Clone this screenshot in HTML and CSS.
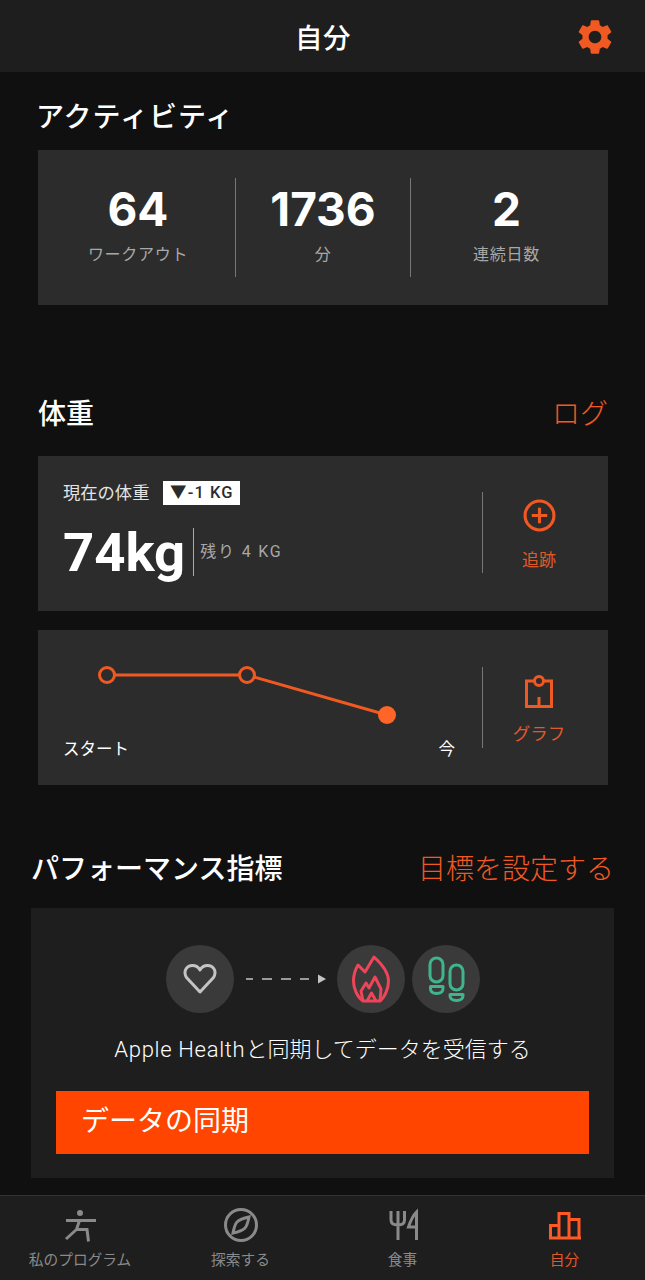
FILE: index.html
```html
<!DOCTYPE html>
<html lang="ja">
<head>
    <meta charset="UTF-8">
    <meta name="viewport" content="width=device-width, initial-scale=1.0">
    <title>自分</title>
    <link rel="stylesheet" href="styles.css">
</head>
<body>
    <div class="topbar">
        <h1>自分</h1>
        <svg class="gear" viewBox="0 0 24 24"><path fill="#f05a22" fill-rule="evenodd" d="M19.14 12.94c.04-.3.06-.61.06-.94 0-.32-.02-.64-.07-.94l2.03-1.58c.18-.14.23-.41.12-.61l-1.92-3.32c-.12-.22-.37-.29-.59-.22l-2.39.96c-.5-.38-1.03-.7-1.62-.94l-.36-2.54c-.04-.24-.24-.41-.48-.41h-3.84c-.24 0-.43.17-.47.41l-.36 2.54c-.59.24-1.13.57-1.62.94l-2.39-.96c-.22-.08-.47 0-.59.22L2.74 8.87c-.12.21-.08.47.12.61l2.03 1.58c-.05.3-.09.63-.09.94s.02.64.07.94l-2.03 1.58c-.18.14-.23.41-.12.61l1.92 3.32c.12.22.37.29.59.22l2.39-.96c.5.38 1.03.7 1.62.94l.36 2.54c.05.24.24.41.48.41h3.84c.24 0 .44-.17.47-.41l.36-2.54c.59-.24 1.13-.56 1.62-.94l2.39.96c.22.08.47 0 .59-.22l1.92-3.32c.12-.22.07-.47-.12-.61l-2.01-1.58zM12 15.6c-1.98 0-3.6-1.62-3.6-3.6s1.62-3.6 3.6-3.6 3.6 1.62 3.6 3.6-1.62 3.6-3.6 3.6z"/></svg>
    </div>

    <div class="main">
        <!-- アクティビティ -->
        <div class="section activity">
            <div class="section-head"><h2>アクティビティ</h2></div>
            <div class="card stats">
                <div class="stat stat-first">
                    <div class="stat-num">64</div>
                    <div class="stat-label">ワークアウト</div>
                </div>
                <div class="stat stat-mid">
                    <div class="stat-num">1736</div>
                    <div class="stat-label">分</div>
                </div>
                <div class="stat stat-last">
                    <div class="stat-num">2</div>
                    <div class="stat-label">連続日数</div>
                </div>
            </div>
        </div>

        <!-- 体重 -->
        <div class="section weight">
            <div class="section-head"><h2>体重</h2><a class="head-link">ログ</a></div>
            <div class="card weight-card">
                <div class="card-body">
                    <div class="weight-top">
                        <span class="weight-title">現在の体重</span>
                        <span class="badge">▼-1 KG</span>
                    </div>
                    <div class="weight-now">
                        <span class="weight-num">74kg</span>
                        <span class="weight-left">残り 4 KG</span>
                    </div>
                </div>
                <div class="card-action">
                    <svg class="action-icon" viewBox="0 0 32 32" fill="none" stroke="#f05a22" stroke-width="3"><circle cx="16" cy="16" r="14"/><path d="M16 8.500v15M8.500 16h15"/></svg>
                    <span>追跡</span>
                </div>
            </div>
            <div class="card graph-card">
                <div class="card-body">
                    <svg class="chart" viewBox="0 0 340 62" fill="none" stroke="#f05a22" stroke-width="3">
                        <path d="M52 13H184L324 53"/>
                        <circle cx="44" cy="13" r="7.500" fill="#2c2c2c"/>
                        <circle cx="184" cy="13" r="7.500" fill="#2c2c2c"/>
                        <circle cx="324" cy="53" r="9" fill="#ff6526" stroke="none"/>
                    </svg>
                    <div class="chart-labels"><span>スタート</span><span>今</span></div>
                </div>
                <div class="card-action">
                    <svg class="action-icon clip" viewBox="0 0 28 33" fill="none" stroke="#f05a22" stroke-width="3"><path d="M9.500 6H1.500v25.500h25V6H18.500"/><circle cx="14" cy="6" r="4.500"/><path d="M14 22v9"/></svg>
                    <span>グラフ</span>
                </div>
            </div>
        </div>

        <!-- パフォーマンス指標 -->
        <div class="section perf">
            <div class="section-head"><h2>パフォーマンス指標</h2><a class="head-link">目標を設定する</a></div>
            <div class="perf-card">
                <div class="sync-row">
                    <div class="round">
                        <svg class="heart" viewBox="0 0 36 36" fill="none" stroke="#c4c4c4" stroke-width="3" stroke-linejoin="round"><path d="M18 31 4.500 16.500C1 11 4 4.500 10.500 4.500c3.500 0 6 1.800 7.500 4.500 1.500-2.700 4-4.500 7.500-4.500C32 4.500 35 11 31.500 16.500Z"/></svg>
                    </div>
                    <svg class="arrow" viewBox="0 0 80 10"><path d="M0 5H7M16 5H26M35 5H45M54 5H63" stroke="#c4c4c4" stroke-width="1.500"/><path d="M72 0.500 80 5 72 9.500Z" fill="#c4c4c4"/></svg>
                    <div class="round">
                        <svg class="flame" viewBox="0 0 38 48" fill="none" stroke="#ee4558" stroke-width="3" stroke-linejoin="round"><path d="M22 2 13 17 6 10C3 15 1.500 20 1.500 26 1.500 33 5 42 11 46H28C33 42 36.500 33 36.500 26 36.500 19 32 11 22 2Z"/><path d="M11 46 9 36 14 28 17 33 23 22 29 34 28 46M15 46 19.500 38 24 46"/></svg>
                    </div>
                    <div class="round">
                        <svg class="feet" viewBox="0 0 37 46" fill="none" stroke="#3eb58d" stroke-width="3" stroke-linejoin="round"><rect x="2" y="2" width="13" height="24" rx="6.500"/><path d="M2.500 30.500h12.500v2c0 3-2 5-6.500 5s-6-2-6-5Z"/><rect x="22" y="9" width="13" height="25" rx="6.500"/><path d="M22 38.500h13v1c0 3-2 5-6.500 5s-6.500-2-6.500-5Z"/></svg>
                    </div>
                </div>
                <p class="sync-text"><span class="sync-latin">Apple Health</span>と同期してデータを受信する</p>
                <div class="sync-btn">データの同期</div>
            </div>
        </div>
    </div>

    <div class="tabbar">
        <div class="tab">
            <svg viewBox="0 0 34 34" fill="none" stroke="#8a8a8a" stroke-width="3"><circle cx="17" cy="5" r="3" fill="#8a8a8a" stroke="none"/><path d="M3 12.500h30M16.500 12.500l-3 9-10.500 9.500M13.500 21.500h10.500l1.500 12"/></svg>
            <span>私のプログラム</span>
        </div>
        <div class="tab">
            <svg viewBox="0 0 34 34" fill="none" stroke="#8a8a8a" stroke-width="3"><circle cx="17" cy="17" r="15.500"/><path d="M25 9C20 10 15 12 13 14 11 16 10 20 9 25c5-1 10-3 12-5 2-2 3-6 4-11Z"/></svg>
            <span>探索する</span>
        </div>
        <div class="tab">
            <svg viewBox="0 0 34 34" fill="none" stroke="#8a8a8a" stroke-width="3"><path d="M5 3v9c0 3 2 5 7 5s6.500-2 6.500-5V3M12 3v29M30.500 32V4c-4 4-6 9-8 15h8"/></svg>
            <span>食事</span>
        </div>
        <div class="tab tab-on">
            <svg viewBox="0 0 34 34" fill="none" stroke="#ff5a26" stroke-width="3"><path d="M2.500 30V17.500H11M11 30V5.500H21V30M21 11.500H31V30M1 30H33"/></svg>
            <span>自分</span>
        </div>
    </div>
</body>
</html>
```

FILE: styles.css
```css
* {
    box-sizing: border-box;
}

body {
    margin: 0;
    height: 1280px;
    display: flex;
    flex-direction: column;
    overflow: hidden;
    background-color: #101010;
    color: white;
    font-family: Roboto, "Noto Sans CJK JP", sans-serif;
}

h1, h2, p {
    margin: 0;
    font-weight: 500;
}

/* Barre du haut */
.topbar {
    height: 72px;
    flex-shrink: 0;
    background-color: #1e1e1e;
    display: flex;
    align-items: center;
    justify-content: space-between;
    padding-left: 295px;
    padding-right: 29px;
}

.topbar h1 {
    font-size: 27.500px;
    letter-spacing: 0.5px;
}

.gear {
    width: 42px;
    height: 42px;
    margin-top: 2px;
}

.main {
    flex: 1;
    overflow: hidden;
}

.section {
    padding: 0 37px 0 38px;
}

.section-head {
    display: flex;
    justify-content: space-between;
    align-items: center;
    height: 40px;
}

.section-head h2 {
    font-size: 28px;
    line-height: 40px;
}

.head-link {
    color: #f05a22;
    font-size: 28px;
    font-weight: 300;
    line-height: 40px;
}

.card {
    background-color: #2c2c2c;
    height: 155px;
}

/* Activité */
.activity {
    padding-top: 26px;
}

.activity .section-head {
    margin-bottom: 12px;
}

.activity h2 {
    letter-spacing: 1px;
    margin-left: -2px;
}

.stats {
    display: grid;
    grid-template-columns: 197px 176px 197px;
    padding-top: 28px;
}

.stat {
    height: 99px;
    text-align: center;
}

.stat-first {
    padding-left: 3px;
}

.stat-last {
    padding-right: 6px;
}

.stat-mid {
    border-left: 1px solid #777;
    border-right: 1px solid #777;
}

.stat-num {
    font-family: Inter, sans-serif;
    font-size: 46px;
    font-weight: 700;
    line-height: 62px;
}

.stat-label {
    color: #a8a8a8;
    font-size: 16px;
    letter-spacing: 0.7px;
    line-height: 24px;
    margin-top: 3px;
}

/* Poids */
.weight {
    padding-top: 90px;
}

.weight .section-head {
    margin-bottom: 21px;
}

.weight-card,
.graph-card {
    display: flex;
    padding: 23px 0 0 25px;
}

.graph-card {
    margin-top: 19px;
    padding-top: 32px;
}

.card-body {
    width: 419px;
    flex-shrink: 0;
}

.weight-top {
    display: flex;
    align-items: center;
    gap: 14px;
}

.weight-title {
    font-size: 17.300px;
    color: #e4e4e4;
    padding-bottom: 2px;
}

.badge {
    background-color: white;
    color: #2c2c2c;
    font-size: 16.500px;
    font-weight: 500;
    letter-spacing: 1.1px;
    line-height: 24px;
    width: 77px;
    text-align: center;
    white-space: nowrap;
}

.weight-now {
    display: flex;
    align-items: center;
    margin-top: 22px;
    height: 48px;
}

.weight-num {
    font-size: 54.500px;
    font-weight: 700;
    line-height: 48px;
    padding-right: 8px;
    border-right: 1px solid #aaa;
}

.weight-left {
    color: #a8a8a8;
    font-size: 16px;
    letter-spacing: 1.8px;
    margin-left: 6px;
    padding-bottom: 4px;
}

.card-action {
    border-left: 1px solid #777;
    height: 81px;
    margin-top: 13px;
    width: 113px;
    display: flex;
    flex-direction: column;
    align-items: center;
    color: #e0592a;
    font-size: 17px;
}

.graph-card .card-action {
    margin-top: 5px;
    font-size: 17.500px;
}

.action-icon {
    width: 33px;
    height: 33px;
    margin-top: 7px;
    margin-bottom: 14px;
}

.clip {
    width: 28px;
    margin-top: 8px;
    margin-bottom: 12px;
}

.chart {
    display: block;
    width: 340px;
    height: 62px;
    overflow: visible;
}

.chart-labels {
    display: flex;
    justify-content: space-between;
    font-size: 16.500px;
    line-height: 24px;
    margin-top: 14px;
    width: 392px;
}

/* Performance */
.perf {
    padding: 65px 31px 0;
}

.perf .section-head {
    margin-bottom: 18px;
}

.perf-card {
    background-color: #1e1e1e;
    height: 270px;
    padding: 37px 25px 0;
}

.sync-row {
    display: flex;
    align-items: center;
    padding-left: 110px;
}

.round {
    width: 68px;
    height: 68px;
    border-radius: 50%;
    background-color: #3a3a3a;
    display: flex;
    align-items: center;
    justify-content: center;
}

.heart {
    width: 36px;
    height: 36px;
}

.flame {
    width: 38px;
    height: 48px;
}

.feet {
    width: 37px;
    height: 46px;
}

.arrow {
    width: 80px;
    height: 10px;
    margin: 0 11px 0 12px;
}

.round + .arrow + .round + .round {
    margin-left: 7px;
}

.sync-text {
    font-size: 22px;
    font-weight: 300;
    text-align: center;
    line-height: 32px;
    margin-top: 21px;
}

.sync-latin {
    letter-spacing: 0.7px;
}

.sync-btn {
    background-color: #ff4500;
    height: 63px;
    margin-top: 25px;
    padding-left: 25px;
    font-size: 28px;
    line-height: 61px;
}

/* Barre d'onglets */
.tabbar {
    height: 85px;
    flex-shrink: 0;
    background-color: #1e1e1e;
    border-top: 1px solid #333;
    display: grid;
    grid-template-columns: 160px 161px 163px 161px;
}

.tab {
    display: flex;
    flex-direction: column;
    align-items: center;
    padding-top: 12px;
    color: #8a8a8a;
    font-size: 14.700px;
}

.tab svg {
    width: 34px;
    height: 34px;
    margin-bottom: 6px;
}

.tab-on {
    color: #e0592a;
}
```
